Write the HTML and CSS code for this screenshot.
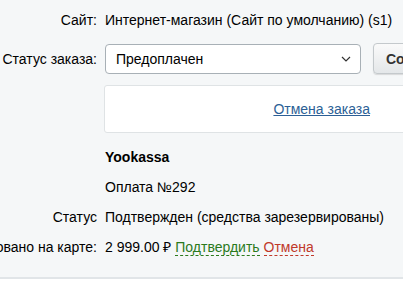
FILE: index.html
```html
<!DOCTYPE html>
<html lang="ru">

<head>
	<meta charset="UTF-8">
	<title>Заказ</title>
	<link rel="stylesheet" href="styles.css">
</head>

<body>
	<div class="order">
		<div class="row row-site">
			<span class="label">Сайт:</span>
			<span class="value">Интернет-магазин (Сайт по умолчанию) (s1)</span>
		</div>
		<div class="row row-status">
			<span class="label">Статус заказа:</span>
			<div class="value status-ctrl">
				<div class="select">
					<span>Предоплачен</span>
					<svg class="select-arrow" width="10" height="6" viewBox="0 0 10 6">
						<path d="M1 1l4 4 4-4" fill="none" stroke="#333" stroke-width="1.2" />
					</svg>
				</div>
				<button class="btn" type="button">Сохранить</button>
			</div>
		</div>
		<div class="row row-box">
			<span class="label"></span>
			<div class="value cancel-box">
				<a href="#" class="cancel-link">Отмена заказа</a>
			</div>
		</div>
		<div class="row row-text">
			<span class="label"></span>
			<span class="value pay-title">Yookassa</span>
		</div>
		<div class="row row-text">
			<span class="label"></span>
			<span class="value">Оплата №292</span>
		</div>
		<div class="row row-text">
			<span class="label">Статус</span>
			<span class="value">Подтвержден (средства зарезервированы)</span>
		</div>
		<div class="row row-text">
			<span class="label">Зарезервировано на карте:</span>
			<span class="value">2 999.00 ₽ <a href="#" class="act act-ok">Подтвердить</a> <a href="#" class="act act-cancel">Отмена</a></span>
		</div>
	</div>
	<div class="footer"></div>
</body>

</html>
```

FILE: styles.css
```css
* {
	margin: 0;
	padding: 0;
	box-sizing: border-box;
}

html,
body {
	height: 100%;
}

body {
	font-family: "Liberation Sans", Arial, sans-serif;
	font-size: 14px;
	color: #000;
	background: #fff;
	overflow: hidden;
}

.order {
	height: 279px;
	padding-top: 10px;
	background: #f5f7f8;
	border-bottom: 2px solid #e1e5e8;
}

.row {
	display: grid;
	grid-template-columns: 97px 1fr;
	column-gap: 8px;
	align-items: center;
	white-space: nowrap;
}

.label {
	display: flex;
	justify-content: flex-end;
	line-height: 20px;
}

.value {
	line-height: 20px;
	min-width: 0;
}

.row-site {
	height: 20px;
}

.row-status {
	margin-top: 13px;
	height: 30px;
}

.status-ctrl {
	display: flex;
	align-items: center;
	gap: 12px;
}

.select {
	display: flex;
	align-items: center;
	justify-content: space-between;
	width: 256px;
	height: 30px;
	padding: 0 9px 0 10px;
	background: #fff;
	border: 1px solid #a8b0b6;
	border-radius: 4px;
	flex-shrink: 0;
}

.btn {
	height: 31px;
	padding: 0 12px;
	font-family: inherit;
	font-size: 14px;
	font-weight: bold;
	color: #333;
	background: linear-gradient(#fafafa, #e4e7e9);
	border: 1px solid #c4c9cc;
	border-radius: 4px;
	box-shadow: 0 1px 1px rgba(0, 0, 0, .12);
	flex-shrink: 0;
}

.row-box {
	margin-top: 12px;
}

.cancel-box {
	display: flex;
	justify-content: flex-end;
	align-items: center;
	height: 48px;
	margin-left: -1px;
	margin-right: -20px;
	padding-right: 52px;
	background: #fff;
	border: 1px solid #dfe3e5;
	border-radius: 3px;
}

.cancel-link {
	color: #2c5f96;
	text-decoration: underline;
}

.row-text {
	margin-top: 10px;
}

.row-box + .row-text {
	margin-top: 14px;
}

.pay-title {
	font-weight: bold;
}

.act {
	text-decoration: none;
	border-bottom: 1px dashed;
}

.act-ok {
	color: #2b7a1d;
}

.act-cancel {
	color: #c0392b;
}

.footer {
	height: 20px;
	background: #fff;
}
```
